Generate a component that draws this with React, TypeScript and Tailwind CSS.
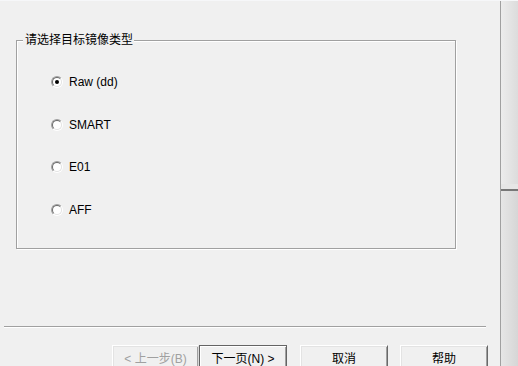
import React from "react";

const font = { fontFamily: '"Liberation Sans", "Noto Sans CJK SC", sans-serif' };

const options = ["Raw (dd)", "SMART", "E01", "AFF"];

function Radio({ checked }: { checked?: boolean }) {
  return (
    <span className="relative w-[12px] h-[12px] shrink-0 rounded-full border border-t-[#a0a0a0] border-l-[#a0a0a0] border-r-white border-b-white">
      <span className="absolute inset-0 rounded-full border border-t-[#696969] border-l-[#696969] border-r-[#e3e3e3] border-b-[#e3e3e3] bg-white flex items-center justify-center">
        {checked && <span className="w-[4px] h-[4px] rounded-full bg-black" />}
      </span>
    </span>
  );
}

function Button({
  label,
  kind = "normal",
  className = "",
}: {
  label: string;
  kind?: "normal" | "default" | "disabled";
  className?: string;
}) {
  const base =
    "h-[27px] shrink-0 flex items-center justify-center text-[12px] leading-[16px] bg-[#f0f0f0]";
  if (kind === "default") {
    return (
      <div
        className={`${base} ${className} border border-[#646464] shadow-[inset_1px_1px_0_#fff,inset_-1px_-1px_0_#a0a0a0] text-black`}
      >
        {label}
      </div>
    );
  }
  return (
    <div
      className={`${base} ${className} border border-t-white border-l-white border-r-[#696969] border-b-[#696969] shadow-[inset_1px_1px_0_#e3e3e3,inset_-1px_-1px_0_#a0a0a0] ${
        kind === "disabled" ? "text-[#a0a0a0] border-r-[#d8d8d8] border-b-[#d8d8d8]" : "text-black"
      }`}
    >
      {label}
    </div>
  );
}

export default function App() {
  return (
    <div
      className="w-[518px] h-[366px] bg-[#f0f0f0] flex overflow-hidden border-t border-[#f6f7f9]"
      style={font}
    >
      <div className="w-[500px] flex flex-col shrink-0">
        <div className="relative shrink-0 mt-[39px] ml-[16px] w-[440px] h-[209px] border border-[#a0a0a0] shadow-[1px_1px_0_#fff,inset_1px_1px_0_#fff]">
          <span className="absolute left-[6px] -top-[9px] pl-[2px] pr-[1px] bg-[#f0f0f0] text-[12px] leading-[16px] text-black">
            请选择目标镜像类型
          </span>
          <div className="flex flex-col pl-[34px] pt-[34px] gap-[28.7px]">
            {options.map((o, i) => (
              <div key={o} className="flex items-center gap-[6px] h-[14px]">
                <Radio checked={i === 0} />
                <span className="text-[12px] leading-[14px] text-black">{o}</span>
              </div>
            ))}
          </div>
        </div>

        <div className="shrink-0 mt-[77px] ml-[4px] w-[482px] h-px bg-[#a0a0a0] shadow-[0_1px_0_#fff]" />

        <div className="shrink-0 flex mt-[18px] ml-[112px]">
          <Button label="< 上一步(B)" kind="disabled" className="w-[87px]" />
          <Button label="下一页(N) >" kind="default" className="w-[88px]" />
          <Button label="取消" className="w-[88px] ml-[13px]" />
          <Button label="帮助" className="w-[88px] ml-[12px]" />
        </div>
      </div>

      <div className="flex-1 flex flex-col border-l border-[#a0a0a0]">
        <div className="h-[183px] shrink-0 bg-gradient-to-r from-[#ececec] to-[#dcdcdc]" />
        <div className="h-[5px] shrink-0 bg-[#e6e6e6]" />
        <div className="h-[2px] shrink-0 bg-[#777777]" />
        <div className="flex-1 bg-gradient-to-r from-[#e6e6e6] to-[#d6d6d6]" />
      </div>
    </div>
  );
}
